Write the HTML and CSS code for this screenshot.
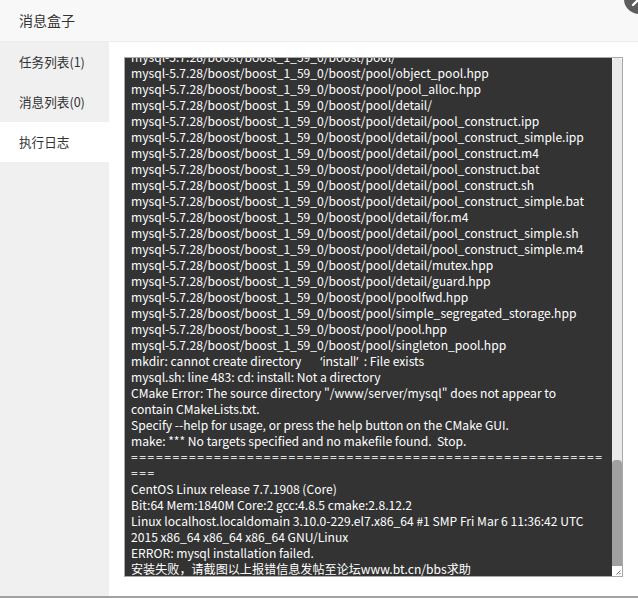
FILE: index.html
```html
<!DOCTYPE html>
<html lang="zh">
<head>
<meta charset="utf-8">
<title>消息盒子</title>
<link rel="stylesheet" href="styles.css">
</head>
<body>
<div class="layer">
  <div class="header">消息盒子</div>
  <span class="close-btn">
    <svg width="30" height="30" viewBox="0 0 30 30"><circle cx="15" cy="15" r="15" fill="#5d5d5d"/><path d="M9 9 L21 21 M21 9 L9 21" stroke="#fff" stroke-width="2.4" stroke-linecap="round"/></svg>
  </span>
  <div class="main">
    <ul class="sidebar">
      <li class="tab">任务列表(1)</li>
      <li class="tab">消息列表(0)</li>
      <li class="tab active">执行日志</li>
    </ul>
    <div class="content">
      <div class="logbox">
        <div class="logtext">
<div class="ln">mysql-5.7.28/boost/boost_1_59_0/boost/pool/detail/pool_construct_simple.m4</div>
<div class="ln">mysql-5.7.28/boost/boost_1_59_0/boost/pool/</div>
<div class="ln">mysql-5.7.28/boost/boost_1_59_0/boost/pool/object_pool.hpp</div>
<div class="ln">mysql-5.7.28/boost/boost_1_59_0/boost/pool/pool_alloc.hpp</div>
<div class="ln">mysql-5.7.28/boost/boost_1_59_0/boost/pool/detail/</div>
<div class="ln">mysql-5.7.28/boost/boost_1_59_0/boost/pool/detail/pool_construct.ipp</div>
<div class="ln">mysql-5.7.28/boost/boost_1_59_0/boost/pool/detail/pool_construct_simple.ipp</div>
<div class="ln">mysql-5.7.28/boost/boost_1_59_0/boost/pool/detail/pool_construct.m4</div>
<div class="ln">mysql-5.7.28/boost/boost_1_59_0/boost/pool/detail/pool_construct.bat</div>
<div class="ln">mysql-5.7.28/boost/boost_1_59_0/boost/pool/detail/pool_construct.sh</div>
<div class="ln">mysql-5.7.28/boost/boost_1_59_0/boost/pool/detail/pool_construct_simple.bat</div>
<div class="ln">mysql-5.7.28/boost/boost_1_59_0/boost/pool/detail/for.m4</div>
<div class="ln">mysql-5.7.28/boost/boost_1_59_0/boost/pool/detail/pool_construct_simple.sh</div>
<div class="ln">mysql-5.7.28/boost/boost_1_59_0/boost/pool/detail/pool_construct_simple.m4</div>
<div class="ln">mysql-5.7.28/boost/boost_1_59_0/boost/pool/detail/mutex.hpp</div>
<div class="ln">mysql-5.7.28/boost/boost_1_59_0/boost/pool/detail/guard.hpp</div>
<div class="ln">mysql-5.7.28/boost/boost_1_59_0/boost/pool/poolfwd.hpp</div>
<div class="ln">mysql-5.7.28/boost/boost_1_59_0/boost/pool/simple_segregated_storage.hpp</div>
<div class="ln">mysql-5.7.28/boost/boost_1_59_0/boost/pool/pool.hpp</div>
<div class="ln">mysql-5.7.28/boost/boost_1_59_0/boost/pool/singleton_pool.hpp</div>
<div class="ln">mkdir: cannot create directory       <span class="q">‘install’</span>  : File exists</div>
<div class="ln">mysql.sh: line 483: cd: install: Not a directory</div>
<div class="ln">CMake Error: The source directory "/www/server/mysql" does not appear to</div>
<div class="ln">contain CMakeLists.txt.</div>
<div class="ln">Specify --help for usage, or press the help button on the CMake GUI.</div>
<div class="ln">make: *** No targets specified and no makefile found.  Stop.</div>
<div class="ln eq">=========================================================</div>
<div class="ln eq">===</div>
<div class="ln">CentOS Linux release 7.7.1908 (Core)</div>
<div class="ln">Bit:64 Mem:1840M Core:2 gcc:4.8.5 cmake:2.8.12.2</div>
<div class="ln">Linux localhost.localdomain 3.10.0-229.el7.x86_64 #1 SMP Fri Mar 6 11:36:42 UTC</div>
<div class="ln">2015 x86_64 x86_64 x86_64 GNU/Linux</div>
<div class="ln">ERROR: mysql installation failed.</div>
<div class="ln last">安装失败，请截图以上报错信息发帖至论坛www.bt.cn/bbs求助</div>
        </div>
        <div class="scrollbar">
          <div class="track">
            <div class="thumb"></div>
          </div>
          <div class="grip">
            <svg width="10" height="10" viewBox="0 0 10 10"><path d="M8.5 4.5 L4.5 8.5 M8.5 7 L7 8.5" stroke="#777" stroke-width="1"/></svg>
          </div>
        </div>
      </div>
    </div>
  </div>
</div>
</body>
</html>
```
FILE: styles.css
```css
html, body {
  margin: 0;
  padding: 0;
  background: #ffffff;
}
body {
  font-family: "Noto Sans CJK SC", "Noto Sans", sans-serif;
  color: #333;
  overflow: hidden;
}
.layer {
  position: relative;
  width: 638px;
  height: 596px;
  border-bottom: 2px solid #a2a2a2;
  display: flex;
  flex-direction: column;
  background: #fff;
  overflow: hidden;
}
.header {
  height: 41px;
  line-height: 41px;
  padding-left: 19px;
  font-size: 14px;
  color: #333;
  background: #f8f8f8;
  border-bottom: 1px solid #ececec;
  flex: none;
}
.close-btn {
  position: absolute;
  left: 624px;
  top: -16px;
  width: 30px;
  height: 30px;
}
.close-btn svg {
  display: block;
}
.main {
  flex: 1;
  display: flex;
  min-height: 0;
}
.sidebar {
  list-style: none;
  margin: 0;
  padding: 0;
  width: 109px;
  background: #f0f0f0;
  flex: none;
}
.tab {
  height: 40px;
  line-height: 40px;
  padding-left: 19px;
  font-size: 12.6px;
  color: #333;
}
.tab.active {
  background: #fff;
}
.content {
  flex: 1;
  padding: 15px 15px 19px 15px;
  display: flex;
  min-width: 0;
}
.logbox {
  flex: 1;
  height: 518px;
  border: 1px solid #a9a9a9;
  display: flex;
  background: #333;
}
.logtext {
  flex: 1;
  min-width: 0;
  overflow: hidden;
  display: flex;
  flex-direction: column;
  justify-content: flex-end;
  padding-left: 6px;
  color: #fff;
  font-size: 12.1px;
}
.ln {
  height: 16px;
  line-height: 16px;
  white-space: pre;
  flex: none;
}
.ln .q {
  font-family: "Noto Sans", sans-serif;
}
.ln.eq {
  letter-spacing: 1.58px;
}
.ln.last {
  margin-bottom: -1px;
}
.scrollbar {
  width: 10px;
  flex: none;
  display: flex;
  flex-direction: column;
  background: #fff;
}
.track {
  flex: 1;
  background: #e9e9e9;
  border-radius: 4px 4px 0 0;
  display: flex;
  flex-direction: column;
  justify-content: flex-end;
}
.thumb {
  height: 106px;
  background: #a0a0a0;
  border-radius: 4px 4px 0 0;
}
.grip {
  height: 10px;
  background: #fff;
}
.grip svg {
  display: block;
}
```
